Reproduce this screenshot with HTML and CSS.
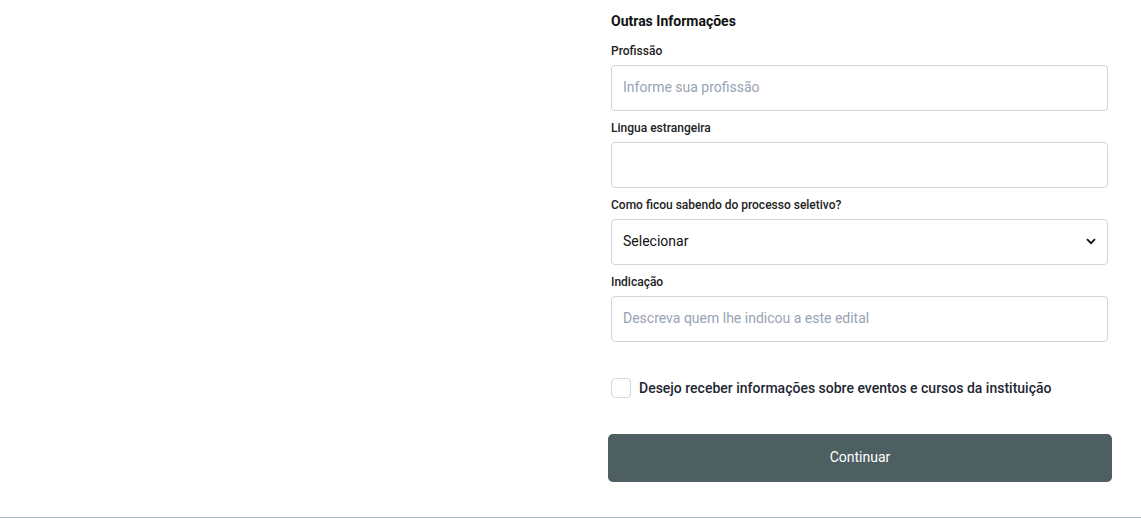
FILE: index.html
```html
<!DOCTYPE html>
<html lang="pt-BR">
<head>
    <meta charset="UTF-8">
    <meta name="viewport" content="width=device-width, initial-scale=1.0">
    <title>Outras Informações</title>
    <link rel="stylesheet" href="styles.css">
</head>
<body>
    <div class="page">
        <div class="form-panel">
            <div class="campos">
                <h3>Outras Informações</h3>

                <div class="grupo">
                    <label for="profissao">Profissão</label>
                    <input type="text" id="profissao" placeholder="Informe sua profissão">
                </div>

                <div class="grupo">
                    <label for="lingua">Lingua estrangeira</label>
                    <input type="text" id="lingua">
                </div>

                <div class="grupo">
                    <label for="origem">Como ficou sabendo do processo seletivo?</label>
                    <div class="select-wrap">
                        <select id="origem">
                            <option>Selecionar</option>
                        </select>
                        <svg class="chevron" width="10" height="7" viewBox="0 0 10 7">
                            <path d="M1 1.2 L5 5.2 L9 1.2" fill="none" stroke="#111" stroke-width="1.8"/>
                        </svg>
                    </div>
                </div>

                <div class="grupo">
                    <label for="indicacao">Indicação</label>
                    <input type="text" id="indicacao" placeholder="Descreva quem lhe indicou a este edital">
                </div>

                <label class="check">
                    <input type="checkbox">
                    <span class="box"></span>
                    Desejo receber informações sobre eventos e cursos da instituição
                </label>
            </div>

            <button class="continuar">Continuar</button>
        </div>
    </div>
    <div class="rodape"></div>
</body>
</html>
```

FILE: styles.css
```css
body {
    font-family: 'Roboto', 'Liberation Sans', sans-serif;
    background-color: #fff;
    margin: 0;
    padding: 0;
    color: #111;
}

.page {
    height: 517px;
    display: flex;
    justify-content: flex-end;
    box-sizing: border-box;
    padding: 12px 29px 0 0;
}

.form-panel {
    width: 504px;
}

.campos {
    padding: 0 4px 0 3px;
}

h3 {
    font-size: 14px;
    font-weight: 700;
    line-height: 18px;
    margin: 0 0 13px;
    color: #111;
}

.grupo {
    margin-bottom: 9px;
}

.grupo:last-of-type {
    margin-bottom: 0;
}

.grupo label {
    display: block;
    font-size: 12px;
    font-weight: 500;
    line-height: 16px;
    margin-bottom: 6px;
    color: #222;
}

input[type="text"], select {
    display: block;
    width: 100%;
    height: 46px;
    box-sizing: border-box;
    border: 1px solid #cdd5df;
    border-radius: 4px;
    padding: 0 11px 2px;
    font-family: inherit;
    font-size: 14px;
    color: #111;
    background-color: #fff;
    outline: none;
}

input::placeholder {
    color: #98a3b3;
}

.select-wrap {
    position: relative;
}

select {
    appearance: none;
    -webkit-appearance: none;
}

.chevron {
    position: absolute;
    right: 12px;
    top: 19px;
    pointer-events: none;
}

.check {
    display: flex;
    align-items: center;
    gap: 8px;
    margin-top: 36px;
    font-size: 14px;
    font-weight: 500;
    color: #1f2633;
    cursor: pointer;
}

.check input {
    display: none;
}

.check .box {
    width: 20px;
    height: 20px;
    box-sizing: border-box;
    border: 1px solid #d3d8de;
    border-radius: 4px;
}

.continuar {
    display: block;
    width: 100%;
    height: 48px;
    margin-top: 36px;
    background-color: #4e5f61;
    color: #fff;
    border: none;
    border-radius: 5px;
    padding: 0 0 2px;
    font-family: inherit;
    font-size: 14px;
    font-weight: 400;
    cursor: pointer;
}

.rodape {
    border-top: 1px solid #a9bcbc;
}
```
